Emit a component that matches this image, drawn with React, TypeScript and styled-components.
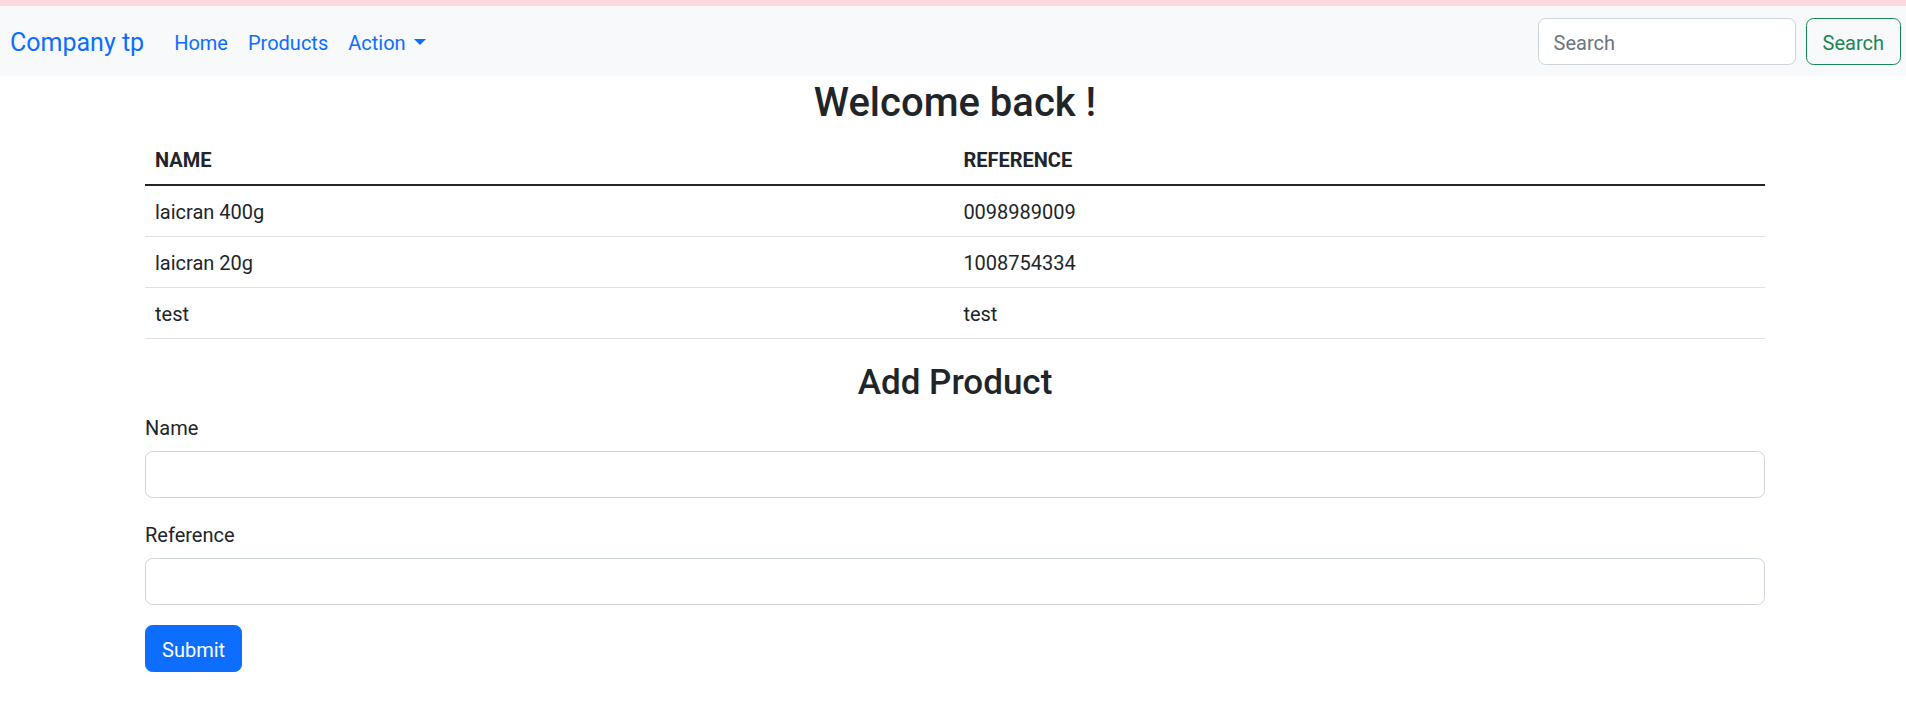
import React from "react";
import styled, { createGlobalStyle } from "styled-components";

const GlobalStyle = createGlobalStyle`
  *, *::before, *::after { box-sizing: border-box; }
  body {
    margin: 0;
    font-family: Roboto, "Liberation Sans", sans-serif;
    font-size: 20px;
    line-height: 1.5;
    color: #212529;
    background: #fff;
  }
`;

const TopStrip = styled.div`
  height: 6px;
  background: #fdd8df;
`;

const Navbar = styled.nav`
  display: flex;
  align-items: center;
  justify-content: space-between;
  background: #f8f9fa;
  padding: 10px 5px 10px 10px;
`;

const NavLeft = styled.div`
  display: flex;
  align-items: center;
`;

const Brand = styled.a`
  font-size: 25px;
  line-height: 37.5px;
  padding: 8px 0 4.5px;
  margin-right: 20px;
  color: #0d6efd;
  text-decoration: none;
  white-space: nowrap;
`;

const NavList = styled.ul`
  display: flex;
  list-style: none;
  margin: 0;
  padding: 0;
`;

const NavLink = styled.a`
  display: flex;
  align-items: center;
  padding: 11.5px 10px 8.5px;
  color: #0d6efd;
  text-decoration: none;
  line-height: 30px;
`;

const Caret = styled.span`
  display: inline-block;
  margin-left: 8px;
  margin-top: -2px;
  border-top: 6px solid currentColor;
  border-left: 6px solid transparent;
  border-right: 6px solid transparent;
  border-bottom: 0;
`;

const SearchForm = styled.form`
  display: flex;
  align-items: center;
`;

const SearchInput = styled.input`
  width: 258px;
  height: 47px;
  padding: 9px 15px 6px;
  margin-right: 10px;
  font: inherit;
  font-size: 20px;
  color: #212529;
  background: #fff;
  border: 1px solid #ced4da;
  border-radius: 7.5px;
  outline: none;
  &::placeholder { color: #6c757d; }
`;

const Button = styled.button<{ $variant: "primary" | "outline-success" }>`
  height: 47px;
  padding: 9px 16px 6px;
  font: inherit;
  font-size: 20px;
  line-height: 30px;
  border-radius: 7.5px;
  cursor: pointer;
  border: 1px solid ${(p) => (p.$variant === "primary" ? "#0d6efd" : "#198754")};
  background: ${(p) => (p.$variant === "primary" ? "#0d6efd" : "transparent")};
  color: ${(p) => (p.$variant === "primary" ? "#fff" : "#198754")};
`;

const Container = styled.main`
  max-width: 1654px;
  margin: 0 auto;
  padding: 0 15px 0 19px;
`;

const Title = styled.h2<{ $size: number }>`
  margin: 0 0 7px;
  padding-top: 3px;
  font-size: ${(p) => p.$size}px;
  font-weight: 500;
  line-height: 1.2;
  text-align: center;
`;

const Table = styled.table`
  width: 100%;
  border-collapse: collapse;
  table-layout: fixed;
  margin-bottom: 20px;
`;

const Th = styled.th<{ $width?: string }>`
  width: ${(p) => p.$width || "auto"};
  padding: 11px 10px 9px;
  text-align: left;
  font-weight: 700;
  border-bottom: 2px solid #212529;
`;

const Td = styled.td`
  padding: 11px 10px 9px;
  border-bottom: 1px solid #dee2e6;
`;

const Field = styled.div`
  margin-bottom: 20px;
`;

const Label = styled.label`
  display: inline-block;
  padding-top: 2px;
  margin-bottom: 8px;
`;

const TextInput = styled.input`
  display: block;
  width: 100%;
  height: 47px;
  padding: 7.5px 15px;
  font: inherit;
  font-size: 20px;
  border: 1px solid #ced4da;
  border-radius: 7.5px;
  background: #fff;
  outline: none;
`;

const products = [
  { name: "laicran 400g", reference: "0098989009" },
  { name: "laicran 20g", reference: "1008754334" },
  { name: "test", reference: "test" },
];

export default function App() {
  return (
    <>
      <GlobalStyle />
      <TopStrip />
      <Navbar>
        <NavLeft>
          <Brand href="#">Company tp</Brand>
          <NavList>
            <li><NavLink href="#">Home</NavLink></li>
            <li><NavLink href="#">Products</NavLink></li>
            <li><NavLink href="#">Action<Caret /></NavLink></li>
          </NavList>
        </NavLeft>
        <SearchForm onSubmit={(e) => e.preventDefault()}>
          <SearchInput type="search" placeholder="Search" aria-label="Search" />
          <Button $variant="outline-success" type="submit">Search</Button>
        </SearchForm>
      </Navbar>
      <Container>
        <Title $size={40}>Welcome back !</Title>
        <Table>
          <thead>
            <tr>
              <Th $width="49.9%">NAME</Th>
              <Th>REFERENCE</Th>
            </tr>
          </thead>
          <tbody>
            {products.map((p, i) => (
              <tr key={i}>
                <Td>{p.name}</Td>
                <Td>{p.reference}</Td>
              </tr>
            ))}
          </tbody>
        </Table>
        <Title as="h3" $size={35}>Add Product</Title>
        <form onSubmit={(e) => e.preventDefault()}>
          <Field>
            <Label htmlFor="name">Name</Label>
            <TextInput id="name" type="text" />
          </Field>
          <Field>
            <Label htmlFor="reference">Reference</Label>
            <TextInput id="reference" type="text" />
          </Field>
          <Button $variant="primary" type="submit">Submit</Button>
        </form>
      </Container>
    </>
  );
}
